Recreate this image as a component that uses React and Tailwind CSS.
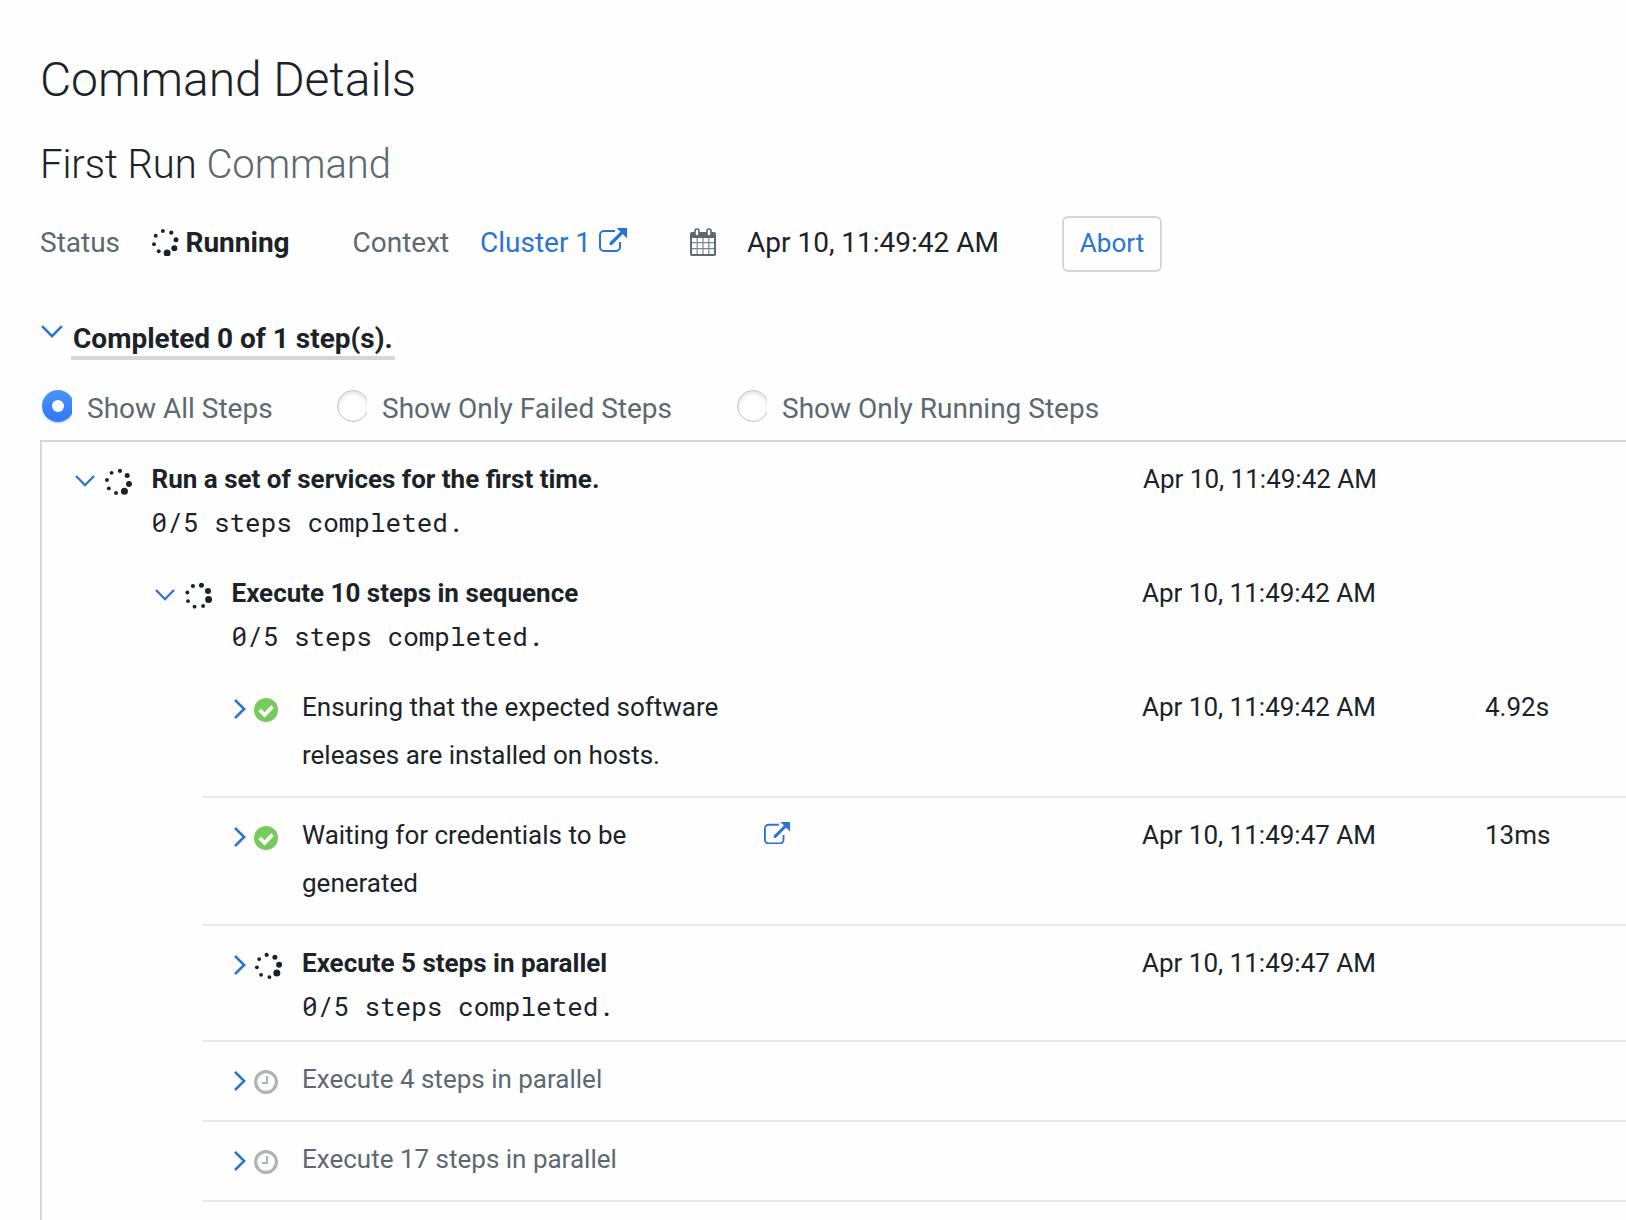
const LINK = "text-[#2a74d2]";

function Chevron({ open, w = 20, className = "" }) {
  return open ? (
    <svg width={w} height={w * 0.6} viewBox="0 0 20 12" fill="none" stroke="#2a74d2" strokeWidth="2.3" className={className}>
      <path d="M1 1l9 9.2L19 1" />
    </svg>
  ) : (
    <svg width="12" height="20" viewBox="0 0 12 20" fill="none" stroke="#2a74d2" strokeWidth="2.5" className={className}>
      <path d="M1 1l9.2 9L1 19" />
    </svg>
  );
}

const DOT_RADII = [3.5, 3, 2.5, 2.1, 1.95, 1.95, 1.95, 1.95];

function Spinner({ angle, className = "" }) {
  return (
    <svg width="28" height="28" viewBox="-14 -14 28 28" fill="#1b2329" className={className}>
      {DOT_RADII.map((r, i) => {
        const a = ((angle - i * 45) * Math.PI) / 180;
        return <circle key={i} cx={11.2 * Math.cos(a)} cy={11.2 * Math.sin(a)} r={r} />;
      })}
    </svg>
  );
}

function CheckCircle() {
  return (
    <svg width="24" height="24" viewBox="0 0 24 24">
      <circle cx="12" cy="12" r="12" fill="#74cc5c" />
      <path d="M5.6 11.8l5 5 8-8.200" fill="none" stroke="#fff" strokeWidth="3.8" />
    </svg>
  );
}

function Clock() {
  return (
    <svg width="24" height="24" viewBox="0 0 24 24" fill="none" stroke="#afb2b8">
      <circle cx="12" cy="12" r="10.4" strokeWidth="3.2" />
      <path d="M13 6v7H8" strokeWidth="2" />
    </svg>
  );
}

function External({ w = 28, className = "" }) {
  return (
    <svg width={w} height={(w * 24) / 28} viewBox="0 0 28 24" className={className}>
      <path d="M16 3H5a4 4 0 0 0-4 4v12a4 4 0 0 0 4 4h12a4 4 0 0 0 4-4v-5" fill="none" stroke="#2a74d2" strokeWidth="2" />
      <path d="M12 15.500L24 3.500" stroke="#2a74d2" strokeWidth="3.200" strokeLinecap="round" />
      <path d="M18 0H28v10l-3-3-4-4z" fill="#2a74d2" stroke="#2a74d2" strokeWidth=".6" />
    </svg>
  );
}

function Calendar({ className = "" }) {
  return (
    <svg width="26" height="28" viewBox="0 0 26 28" className={className}>
      <path d="M2 4h22a2 2 0 0 1 2 2v20a2 2 0 0 1-2 2H2a2 2 0 0 1-2-2V6a2 2 0 0 1 2-2z" fill="#5d6870" />
      <path d="M2 10h22v16H2z" fill="#fefefe" />
      <path d="M7.200 10v16M13 10v16M18.800 10v16M2 14.700h22M2 20.700h22" stroke="#5d6870" strokeOpacity=".8" strokeWidth="1.200" />
      <rect x="5" y="1" width="4" height="7" rx="2" fill="#fefefe" stroke="#5d6870" strokeWidth="1.600" />
      <rect x="17" y="1" width="4" height="7" rx="2" fill="#fefefe" stroke="#5d6870" strokeWidth="1.600" />
    </svg>
  );
}

function Radio({ checked, label, className = "" }) {
  return (
    <label className={"flex text-[28px] leading-[42px] text-[#5d6870] " + className}>
      <span className="mt-[2px] mr-[15px] h-[36px] w-[30px] overflow-hidden">
        {checked ? (
          <span className="flex size-[32px] items-center justify-center rounded-full bg-linear-to-b from-[#4b93f8] to-[#2e78f5] shadow-[0_1px_2px_#2e78f566]">
            <span className="size-[12px] rounded-full bg-white" />
          </span>
        ) : (
          <span className="block size-[32px] rounded-full border border-[#c4c4c4] bg-white shadow-[inset_0_2px_4px_#00000022]" />
        )}
      </span>
      {label}
    </label>
  );
}

const ROWS = [
  { depth: 0, open: true, state: "run", angle: 55, title: "Run a set of services for the first time.", sub: true, time: "Apr 10, 11:49:42 AM" },
  { depth: 1, open: true, state: "run", angle: 18, title: "Execute 10 steps in sequence", sub: true, time: "Apr 10, 11:49:42 AM" },
  { depth: 2, state: "ok", title: "Ensuring that the expected software releases are installed on hosts.", time: "Apr 10, 11:49:42 AM", took: "4.92s" },
  { depth: 2, state: "ok", title: "Waiting for credentials to be generated", link: true, time: "Apr 10, 11:49:47 AM", took: "13ms" },
  { depth: 2, state: "run", angle: 38, title: "Execute 5 steps in parallel", sub: true, time: "Apr 10, 11:49:47 AM" },
  { depth: 2, state: "wait", title: "Execute 4 steps in parallel" },
  { depth: 2, state: "wait", title: "Execute 17 steps in parallel" },
];

const INDENT = ["ml-0 pl-[33px]", "ml-[80px] pl-[33px]", "ml-[160px] pl-[32px]"];
const ICONS = ["w-[76.5px]", "w-[76.5px]", "w-[68px]"];

function Row({ r }) {
  const nested = r.depth === 2;
  return (
    <div
      className={
        "flex pt-[13px] text-[26px] leading-[48px] " +
        INDENT[r.depth] +
        (r.sub ? (nested ? " h-[116px]" : " h-[114px]") : " pb-[17px]") +
        (nested ? " border-b-2 border-[#e9eaeb]" : "")
      }
    >
      <div className={"flex shrink-0 " + ICONS[r.depth]}>
        {r.open ? <Chevron open className="mt-[20px] mr-[9px]" /> : <Chevron className="mt-[16px] mr-[8px]" />}
        <div className={nested && r.state !== "run" ? "mt-[15px]" : "mt-[13px]"}>
          {r.state === "run" && <Spinner angle={r.angle} />}
          {r.state === "ok" && <CheckCircle />}
          {r.state === "wait" && <Clock />}
        </div>
      </div>
      <div className={nested ? "w-[462px] pr-[30px]" : "flex-1"}>
        <div className={r.state === "run" ? "font-bold" : r.state === "wait" ? "text-[#5d6870]" : ""}>{r.title}</div>
        {r.sub && <div className="mt-[1px] font-['Roboto_Mono','Liberation_Mono',monospace] leading-[36px]">0/5 steps completed.</div>}
      </div>
      {nested && <div className="flex-1">{r.link && <External w={26} className="mt-[11px]" />}</div>}
      <div className={r.depth === 0 ? "w-[342px] shrink-0" : "w-[343px] shrink-0"}>{r.time}</div>
      <div className="w-[141px] shrink-0">{r.took}</div>
    </div>
  );
}

export default function App() {
  return (
    <div className="h-[1220px] w-[1626px] overflow-hidden bg-[#fefefe] pl-[40px] font-['Roboto',sans-serif] text-[#1b2329]">
      <h1 className="pt-[50px] text-[48px] leading-[60px] font-light tracking-[-0.06px]">Command Details</h1>
      <h2 className="mt-[31px] text-[40px] leading-[48px] font-light tracking-[-0.06px]">
        First Run <span className="text-[#5d6870]">Command</span>
      </h2>
      <div className="mt-[27px] flex h-[56px] text-[28px] leading-[54px]">
        <span className="w-[111px] text-[#5d6870]">Status</span>
        <Spinner angle={79} className="mt-[12px] mr-[6.5px]" />
        <span className="w-[167px] font-bold">Running</span>
        <span className="w-[127.5px] text-[#5d6870]">Context</span>
        <span className={"flex w-[210px] " + LINK}>
          Cluster 1<External className="mt-[12px] ml-[8px]" />
        </span>
        <Calendar className="mt-[12px] mr-[31px]" />
        <span className="w-[315px]">Apr 10, 11:49:42 AM</span>
        <button className={"h-[56px] w-[100px] rounded-[6px] border-2 border-[#d5d6dc] pb-[2px] text-[26px] leading-[50px] " + LINK}>Abort</button>
      </div>
      <div className="mt-[48px] flex">
        <Chevron open w={22} className="mt-[5px] mr-[8px] ml-[1px]" />
        <span className="h-[40px] border-b-4 border-[#d5d6dc] px-[2px] text-[28px] leading-[38px] font-bold">Completed 0 of 1 step(s).</span>
      </div>
      <div className="mt-[28px] flex h-[52px] pl-[2px]">
        <Radio checked label="Show All Steps" className="w-[295px]" />
        <Radio label="Show Only Failed Steps" className="w-[400px]" />
        <Radio label="Show Only Running Steps" />
      </div>
      <div className="h-[900px] border-t-2 border-l-2 border-[#d5d6dc]">
        {ROWS.map((r) => (
          <Row key={r.title} r={r} />
        ))}
      </div>
    </div>
  );
}
